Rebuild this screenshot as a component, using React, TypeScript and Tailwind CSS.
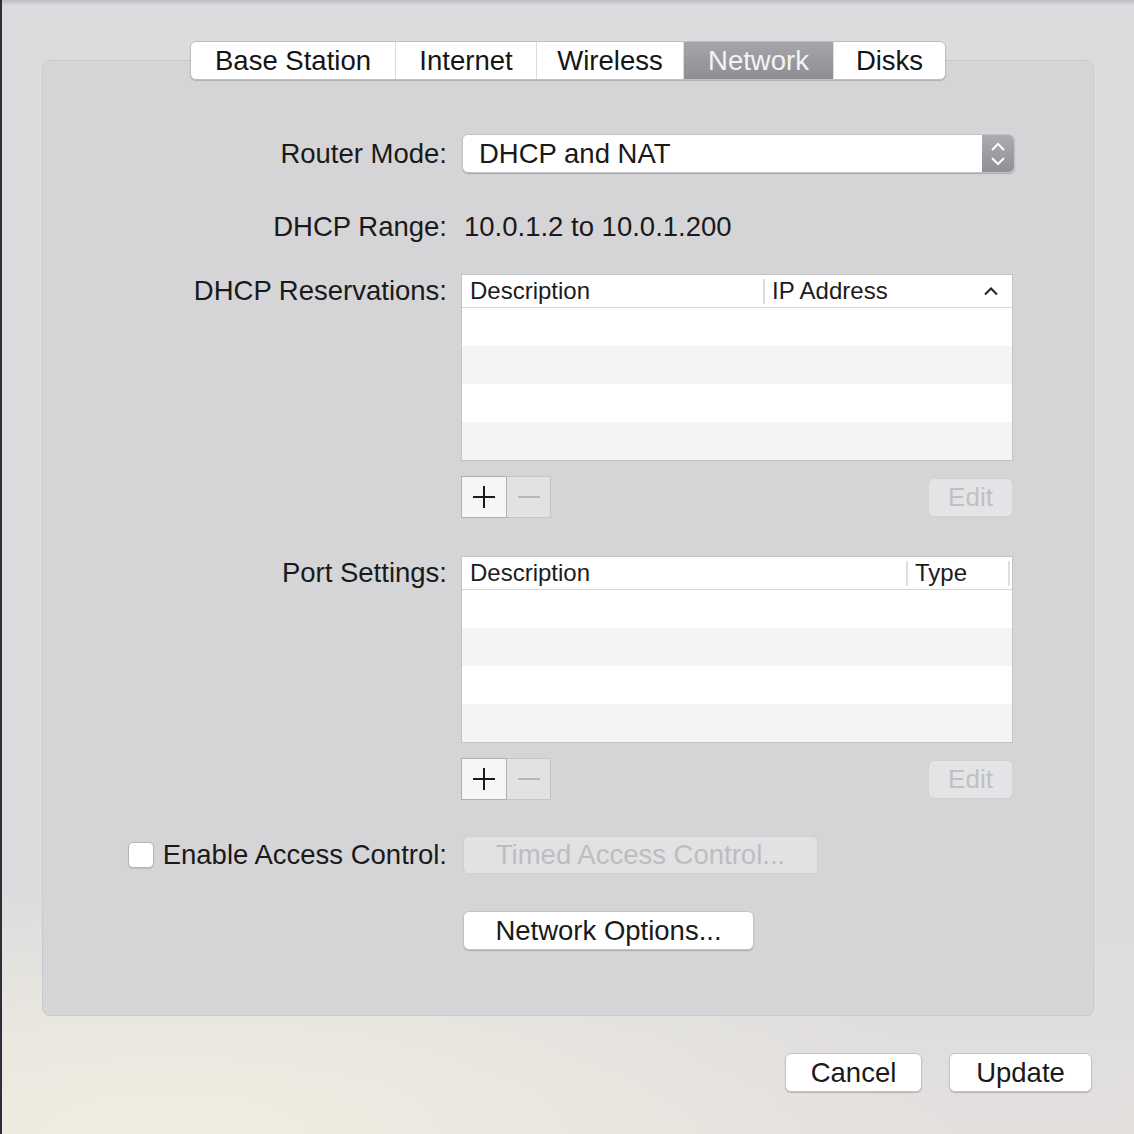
import React from "react";

const TABS = [
  { label: "Base Station", w: "w-[204px]" },
  { label: "Internet", w: "w-[141px]" },
  { label: "Wireless", w: "w-[147px]" },
  { label: "Network", w: "w-[150px]", active: true },
  { label: "Disks", w: "w-[112px]" },
];

function Tabs() {
  return (
    <div className="relative -mt-[20px] flex justify-center">
      <div className="flex h-[39px] overflow-hidden rounded-[6px] border border-[#bfbfc1] bg-white shadow-[0_1px_1px_rgba(0,0,0,0.18)]">
        {TABS.map((t, i) => (
          <div
            key={t.label}
            className={`${t.w} flex items-center justify-center text-[27.5px] ${
              i > 0 ? "border-l border-[#dcdcdc]" : ""
            } ${
              t.active
                ? "bg-gradient-to-b from-[#a6a6aa] to-[#8f8f93] text-[#f4f4f4]"
                : "text-[#151515]"
            }`}
          >
            {t.label}
          </div>
        ))}
      </div>
    </div>
  );
}

function PlusMinus() {
  return (
    <div className="flex h-[42px]">
      <div className="flex w-[46px] items-center justify-center border border-[#b0b0b2] bg-[#f6f6f6]">
        <svg width="24" height="24" viewBox="0 0 24 24">
          <path d="M12 1v22M1 12h22" stroke="#1a1a1a" strokeWidth="2" />
        </svg>
      </div>
      <div className="flex w-[44px] items-center justify-center border border-l-0 border-[#c6c6c8] bg-[#e2e2e4]">
        <svg width="24" height="24" viewBox="0 0 24 24">
          <path d="M1 12h22" stroke="#b8b8ba" strokeWidth="2" />
        </svg>
      </div>
    </div>
  );
}

function EditButton() {
  return (
    <div className="flex h-[39px] w-[85px] items-center justify-center rounded-[6px] border border-[#d2d2d4] bg-[#e4e4e6] text-[26px] leading-none text-[#c0c0c2]">
      Edit
    </div>
  );
}

function Table({ second, secondW, sortArrow }: { second: string; secondW: string; sortArrow?: boolean }) {
  return (
    <div className="w-[552px] border border-[#c3c3c5] bg-white">
      <div className="flex h-[33px] items-center border-b border-[#d6d6d8] text-[24px] leading-none text-[#1c1c1c]">
        <div className="flex-1 pl-[8px]">Description</div>
        <div className={`${secondW} flex h-[25px] items-center border-l-2 border-[#dedede] pl-[7px]`}>
          <span className="flex-1">{second}</span>
          {sortArrow ? (
            <svg width="16" height="10" viewBox="0 0 16 10" className="mr-[13px]">
              <path d="M2 8.5L8 2.5l6 6" fill="none" stroke="#222" strokeWidth="2" />
            </svg>
          ) : (
            <span className="mr-[2px] h-[25px] border-r-2 border-[#dedede]" />
          )}
        </div>
      </div>
      <div className="h-[38px] bg-white" />
      <div className="h-[38px] bg-[#f4f4f4]" />
      <div className="h-[38px] bg-white" />
      <div className="h-[38px] bg-[#f4f4f4]" />
    </div>
  );
}

function Label({ children, tall }: { children: React.ReactNode; tall?: boolean }) {
  return (
    <div
      className={`flex w-[404px] shrink-0 items-center justify-end text-[27.5px] leading-none text-[#1a1a1a] ${
        tall ? "h-[34px]" : ""
      }`}
    >
      {children}
    </div>
  );
}

function PushButton({ children, w }: { children: React.ReactNode; w: string }) {
  return (
    <div
      className={`${w} flex h-[39px] items-center justify-center rounded-[6px] border border-[#c4c4c6] bg-white text-[27.5px] leading-none text-[#1a1a1a] shadow-[0_1px_1px_rgba(0,0,0,0.2)]`}
    >
      {children}
    </div>
  );
}

export default function App() {
  return (
    <div className="h-[1134px] w-[1134px] overflow-hidden border-l-2 border-[#2c2f37] bg-[linear-gradient(to_bottom,#dcdcdf_0%,#dcdcde_80%,#e3e0de_100%)] font-['Liberation_Sans',Arial,sans-serif]">
      <div className="h-[1134px] w-full bg-[radial-gradient(ellipse_70%_22%_at_15%_100%,#f1ede1_0%,rgba(241,237,225,0.6)_45%,rgba(241,237,225,0)_100%)]">
        <div className="h-[5px] bg-gradient-to-b from-[#bebec2] to-[#d8d8db]" />

        {/* Main box */}
        <div className="ml-[40px] mt-[55px] h-[956px] w-[1052px] rounded-[8px] border border-[#c9c9cb] bg-[#d5d5d7]">
          <Tabs />

          <div className="mt-[54px] flex h-[39px]">
            <Label>Router Mode:</Label>
            <div className="ml-[15px] flex h-[39px] w-[553px] overflow-hidden rounded-[6px] border border-[#c4c4c6] bg-white shadow-[0_1px_1px_rgba(0,0,0,0.2)]">
              <div className="flex flex-1 items-center pl-[16px] text-[27.5px] leading-none text-[#1a1a1a]">DHCP and NAT</div>
              <div className="flex w-[32px] items-center justify-center bg-gradient-to-b from-[#acacb0] to-[#909094]">
                <svg width="16" height="26" viewBox="0 0 16 26">
                  <path d="M2 9l6-6 6 6M2 17l6 6 6-6" fill="none" stroke="#fff" strokeWidth="2" />
                </svg>
              </div>
            </div>
          </div>

          <div className="mt-[34px] flex h-[39px]">
            <Label>DHCP Range:</Label>
            <div className="ml-[17px] flex items-center text-[27.5px] leading-none text-[#1a1a1a]">10.0.1.2 to 10.0.1.200</div>
          </div>

          <div className="mt-[28px] flex items-start">
            <Label tall>DHCP Reservations:</Label>
            <div className="ml-[14px]">
              <Table second="IP Address" secondW="w-[249px]" sortArrow />
              <div className="mt-[15px] flex w-[552px] items-center justify-between">
                <PlusMinus />
                <EditButton />
              </div>
            </div>
          </div>

          <div className="mt-[38px] flex items-start">
            <Label tall>Port Settings:</Label>
            <div className="ml-[14px]">
              <Table second="Type" secondW="w-[106px]" />
              <div className="mt-[15px] flex w-[552px] items-center justify-between">
                <PlusMinus />
                <EditButton />
              </div>
            </div>
          </div>

          <div className="mt-[36px] flex h-[38px]">
            <div className="flex w-[404px] shrink-0 items-center justify-end gap-[9px] text-[27.5px] leading-none text-[#1a1a1a]">
              <div className="h-[26px] w-[26px] rounded-[5px] border border-[#b4b4b6] bg-white shadow-[0_1px_1px_rgba(0,0,0,0.12)]" />
              <span>Enable Access Control:</span>
            </div>
            <div className="ml-[16px] flex w-[355px] items-center justify-center rounded-[6px] border border-[#d0d0d2] bg-[#e2e2e4] text-[27.5px] leading-none text-[#bdbdbf]">
              Timed Access Control...
            </div>
          </div>

          <div className="mt-[37px] flex">
            <div className="w-[404px] shrink-0" />
            <div className="ml-[16px]">
              <PushButton w="w-[291px]">Network Options...</PushButton>
            </div>
          </div>
        </div>

        <div className="mt-[37px] flex justify-end gap-[27px] pr-[42px]">
          <PushButton w="w-[137px]">Cancel</PushButton>
          <PushButton w="w-[143px]">Update</PushButton>
        </div>
      </div>
    </div>
  );
}
